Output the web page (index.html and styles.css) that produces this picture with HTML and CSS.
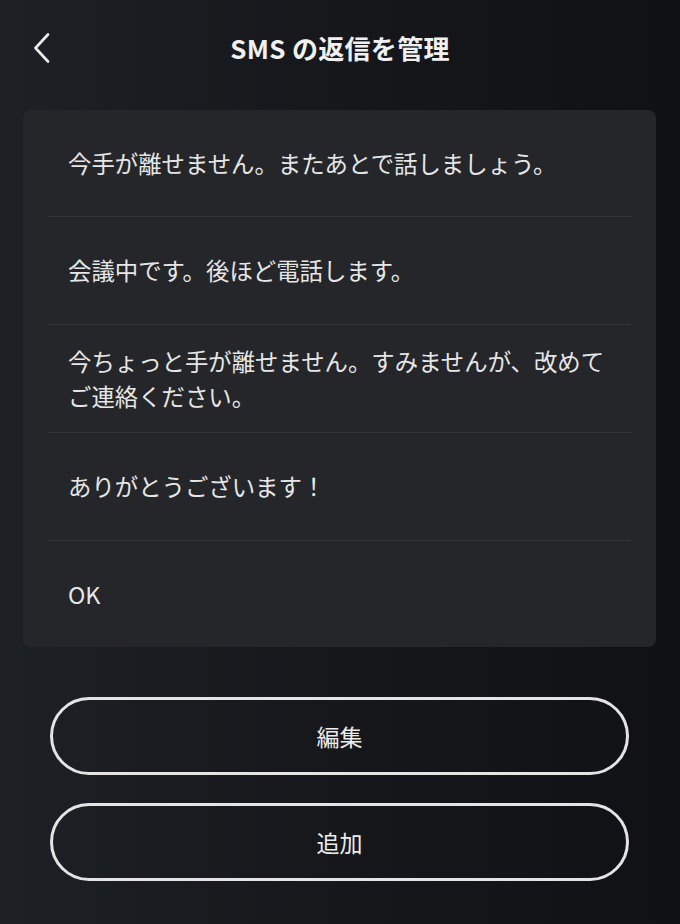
FILE: index.html
```html
<!DOCTYPE html>
<html lang="ja">
<head>
  <meta charset="UTF-8">
  <meta name="viewport" content="width=device-width, initial-scale=1.0">
  <title>SMS の返信を管理</title>
  <link rel="stylesheet" href="styles.css">
</head>
<body>
  <div class="page">
    <div class="header">
      <button class="back" aria-label="戻る">
        <svg width="18" height="30" viewBox="0 0 18 30">
          <path d="M15 1.5 L2.5 15 L15 28.5" fill="none" stroke="#ececec" stroke-width="2.6" stroke-linecap="round" stroke-linejoin="round"/>
        </svg>
      </button>
      <h1>SMS の返信を管理</h1>
    </div>

    <ul class="replies">
      <li>今手が離せません。またあとで話しましょう。</li>
      <li>会議中です。後ほど電話します。</li>
      <li>今ちょっと手が離せません。すみませんが、改めてご連絡ください。</li>
      <li>ありがとうございます！</li>
      <li>OK</li>
    </ul>

    <div class="actions">
      <button class="pill">編集</button>
      <button class="pill">追加</button>
    </div>
  </div>
</body>
</html>
```

FILE: styles.css
```css
html, body {
  margin: 0;
  height: 100%;
}
body {
  font-family: "Noto Sans CJK JP", "Noto Sans", sans-serif;
  background: linear-gradient(to right, #1d2025 0%, #16181c 45%, #0f1114 100%);
  color: #e9e9e9;
}
.page {
  min-height: 924px;
}
.header {
  position: relative;
  height: 96px;
  display: flex;
  align-items: center;
  justify-content: center;
}
.header h1 {
  margin: 0 0 2px;
  font-size: 26px;
  font-weight: 700;
  color: #f0f0f0;
  letter-spacing: 0.3px;
}
.back {
  position: absolute;
  left: 33px;
  top: 33px;
  padding: 0;
  background: none;
  border: none;
  cursor: pointer;
  line-height: 0;
}
.replies {
  list-style: none;
  margin: 14px 24px 0 23px;
  padding: 0;
  background-color: #24262a;
  border-radius: 8px;
}
.replies li {
  box-sizing: border-box;
  height: 108px;
  margin: 0 25px;
  padding: 0 20px;
  display: flex;
  align-items: center;
  font-size: 23.4px;
  line-height: 35px;
  color: #e6e6e6;
  border-bottom: 1px solid #33363b;
}
.replies li:first-child {
  height: 107px;
}
.replies li:last-child {
  border-bottom: none;
  height: 106px;
}
.actions {
  margin: 50px 51px 0 50px;
  display: flex;
  flex-direction: column;
  gap: 28px;
}
.pill {
  height: 78px;
  border: 3px solid #e4e4e4;
  border-radius: 39px;
  background: transparent;
  color: #ececec;
  font-family: inherit;
  font-size: 23px;
  cursor: pointer;
}
```
